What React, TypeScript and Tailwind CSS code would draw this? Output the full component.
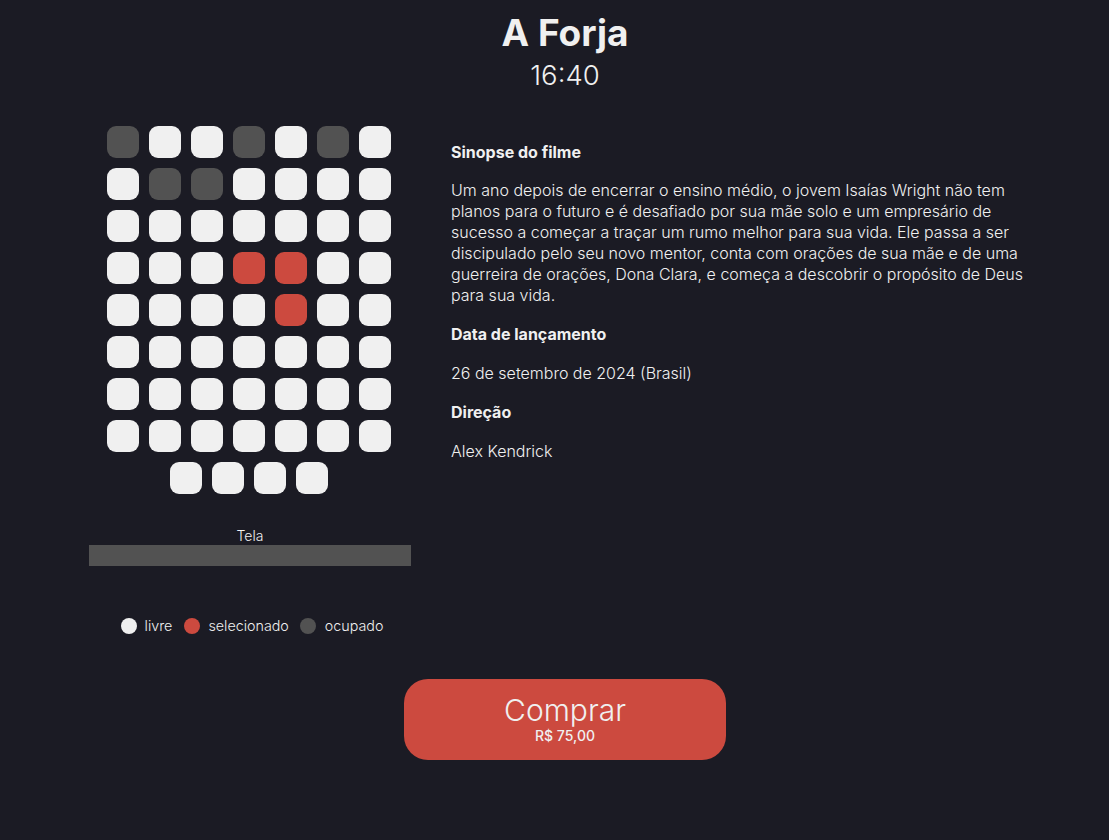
import React from "react";

type S = "w" | "g" | "r";

const rows: S[][] = [
  ["g", "w", "w", "g", "w", "g", "w"],
  ["w", "g", "g", "w", "w", "w", "w"],
  ["w", "w", "w", "w", "w", "w", "w"],
  ["w", "w", "w", "r", "r", "w", "w"],
  ["w", "w", "w", "w", "r", "w", "w"],
  ["w", "w", "w", "w", "w", "w", "w"],
  ["w", "w", "w", "w", "w", "w", "w"],
  ["w", "w", "w", "w", "w", "w", "w"],
  ["w", "w", "w", "w"],
];

const seatClass: Record<S, string> = {
  w: "bg-[#f0f0f0]",
  g: "bg-[#525252]",
  r: "bg-[#cc4a3f]",
};

export default function App() {
  return (
    <div
      className="min-h-[840px] w-full bg-[#1b1b24] text-[#f0f0f0] pl-[21px] flex flex-col items-center"
      style={{ fontFamily: "Inter, 'Noto Sans', sans-serif" }}
    >
      <h1 className="text-[37px] font-bold leading-[44px] mt-[11px]">A Forja</h1>
      <div className="text-[27.5px] font-light leading-[36px] mt-[2px]">16:40</div>

      <div className="flex gap-[40px] mt-[33px] w-[952px]">
        <div className="w-[322px] flex flex-col items-center shrink-0">
          <div className="flex flex-col gap-[10px] -translate-x-[1px]">
            {rows.map((row, i) => (
              <div key={i} className="flex gap-[10px] justify-center">
                {row.map((s, j) => (
                  <div key={j} className={`w-[32px] h-[32px] rounded-[9px] ${seatClass[s]}`} />
                ))}
              </div>
            ))}
          </div>
          <div className="text-[14px] font-light leading-[16px] mt-[34px]">Tela</div>
          <div className="w-[322px] h-[21px] bg-[#525252] mt-[1px]" />
          <div className="flex items-center mt-[51px] text-[14.3px] font-light leading-[18px] translate-x-[2px]">
            <span className="w-[16px] h-[16px] rounded-full bg-[#f0f0f0]" />
            <span className="ml-[8px] mr-[12px]">livre</span>
            <span className="w-[16px] h-[16px] rounded-full bg-[#cc4a3f]" />
            <span className="ml-[8px] mr-[11px]">selecionado</span>
            <span className="w-[16px] h-[16px] rounded-full bg-[#525252]" />
            <span className="ml-[9px]">ocupado</span>
          </div>
        </div>

        <div className="w-[590px] pt-[16px] text-[16px] leading-[21px]">
          <h3 className="font-bold">Sinopse do filme</h3>
          <p className="font-light mt-[17px]">
            Um ano depois de encerrar o ensino médio, o jovem Isaías Wright não tem planos para o futuro e é
            desafiado por sua mãe solo e um empresário de sucesso a começar a traçar um rumo melhor para sua vida.
            Ele passa a ser discipulado pelo seu novo mentor, conta com orações de sua mãe e de uma guerreira de
            orações, Dona Clara, e começa a descobrir o propósito de Deus para sua vida.
          </p>
          <h3 className="font-bold mt-[18px]">Data de lançamento</h3>
          <p className="font-light mt-[18px]">26 de setembro de 2024 (Brasil)</p>
          <h3 className="font-bold mt-[18px]">Direção</h3>
          <p className="font-light mt-[18px]">Alex Kendrick</p>
        </div>
      </div>

      <button className="mt-[44px] w-[322px] h-[81px] rounded-[24px] bg-[#cc4a3f] flex flex-col items-center justify-center pb-[3px]">
        <span className="text-[30px] font-light leading-[34px]">Comprar</span>
        <span className="text-[14px] font-medium leading-[17px]">R$ 75,00</span>
      </button>
    </div>
  );
}
